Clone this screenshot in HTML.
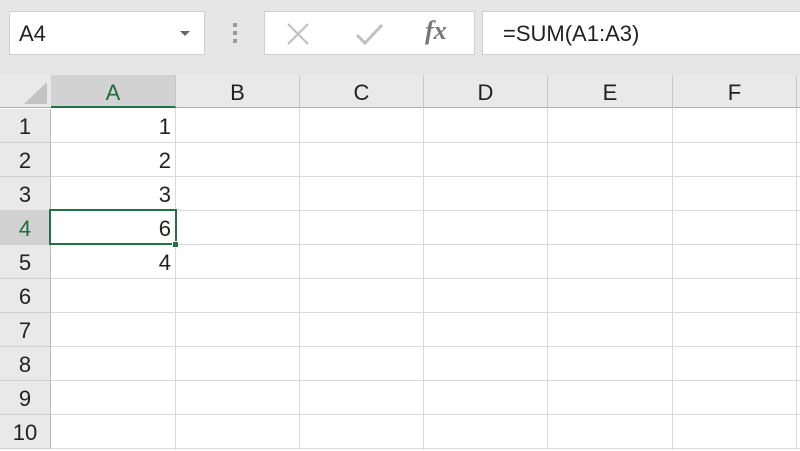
<!DOCTYPE html><html><head><style>
body{margin:0;width:800px;height:450px;overflow:hidden;background:#fff;font-family:"Liberation Sans",Arial,sans-serif;position:relative}
div{position:absolute;box-sizing:border-box}
.t{font-size:22px;color:#222}
.ch{top:75px;height:33px;font-size:22px;color:#222;text-align:center;line-height:36px;border-right:1px solid #c8c8c8}
.rh{left:0;width:51px;height:34px;font-size:22px;color:#222;text-align:center;line-height:36px;background:#e9e9e9;border-bottom:1px solid #cfcfcf;border-right:1px solid #b8b8b8}
.hl{left:51px;width:749px;height:1px;background:#dadada}
.vl{top:108px;width:1px;height:342px;background:#dadada}
.n{left:51px;width:120px;text-align:right;font-size:22px;color:#222;line-height:36px;height:34px}
</style></head><body>
<div style="left:0;top:0;width:800px;height:75px;background:#e6e6e6"></div>
<div style="left:9px;top:11px;width:196px;height:44px;background:#fff;border:1px solid #cfcfcf"></div>
<div class="t" style="left:19px;top:21px">A4</div>
<div style="left:180px;top:31px;width:0;height:0;border-left:5px solid transparent;border-right:5px solid transparent;border-top:5px solid #666"></div>
<div style="left:233px;top:23px;width:4px;height:4px;background:#999;box-shadow:0 8px 0 #999,0 16px 0 #999"></div>
<div style="left:264px;top:11px;width:211px;height:44px;background:#fff;border:1px solid #cfcfcf"></div>
<svg style="position:absolute;left:286px;top:22px" width="24" height="24"><path d="M2 2L22 22M22 2L2 22" stroke="#c0c0c0" stroke-width="2"/></svg>
<svg style="position:absolute;left:355px;top:22px" width="30" height="24"><path d="M2 13L10 21L27 3" stroke="#c0c0c0" stroke-width="3" fill="none"/></svg>
<div style="left:425px;top:16px;font-family:'Liberation Serif',serif;font-style:italic;font-weight:bold;font-size:26px;color:#777">fx</div>
<div style="left:482px;top:11px;width:320px;height:44px;background:#fff;border:1px solid #cfcfcf"></div>
<div class="t" style="left:503px;top:21px">=SUM(A1:A3)</div>
<div style="left:0;top:75px;width:800px;height:33px;background:#e9e9e9;border-bottom:1px solid #b0b0b0"></div>
<svg style="position:absolute;left:20px;top:79px" width="30" height="28"><path d="M27 3L27 25L4 25Z" fill="#c3c3c3"/></svg>
<div class="ch" style="left:51px;width:125px;background:#d2d2d2;color:#1f6b3b;border-bottom:2px solid #217346">A</div>
<div class="ch" style="left:176px;width:124px">B</div>
<div class="ch" style="left:300px;width:124px">C</div>
<div class="ch" style="left:424px;width:124px">D</div>
<div class="ch" style="left:548px;width:125px">E</div>
<div class="ch" style="left:673px;width:124px">F</div>
<div class="rh" style="top:109px">1</div>
<div class="rh" style="top:143px">2</div>
<div class="rh" style="top:177px">3</div>
<div class="rh" style="top:211px;background:#d2d2d2;color:#1f6b3b">4</div>
<div class="rh" style="top:245px">5</div>
<div class="rh" style="top:279px">6</div>
<div class="rh" style="top:313px">7</div>
<div class="rh" style="top:347px">8</div>
<div class="rh" style="top:381px">9</div>
<div class="rh" style="top:415px">10</div>
<div class="hl" style="top:142px"></div><div class="hl" style="top:176px"></div><div class="hl" style="top:210px"></div><div class="hl" style="top:244px"></div><div class="hl" style="top:278px"></div><div class="hl" style="top:312px"></div><div class="hl" style="top:346px"></div><div class="hl" style="top:380px"></div><div class="hl" style="top:414px"></div><div class="hl" style="top:448px"></div>
<div class="vl" style="left:175px"></div><div class="vl" style="left:299px"></div><div class="vl" style="left:423px"></div><div class="vl" style="left:547px"></div><div class="vl" style="left:672px"></div><div class="vl" style="left:796px"></div>
<div class="n" style="top:109px">1</div>
<div class="n" style="top:143px">2</div>
<div class="n" style="top:177px">3</div>
<div class="n" style="top:211px">6</div>
<div class="n" style="top:245px">4</div>
<div style="left:49px;top:209px;width:128px;height:36px;border:2px solid #217346"></div>
<div style="left:172px;top:241px;width:7px;height:7px;background:#217346;border:1px solid #fff"></div>
</body></html>
